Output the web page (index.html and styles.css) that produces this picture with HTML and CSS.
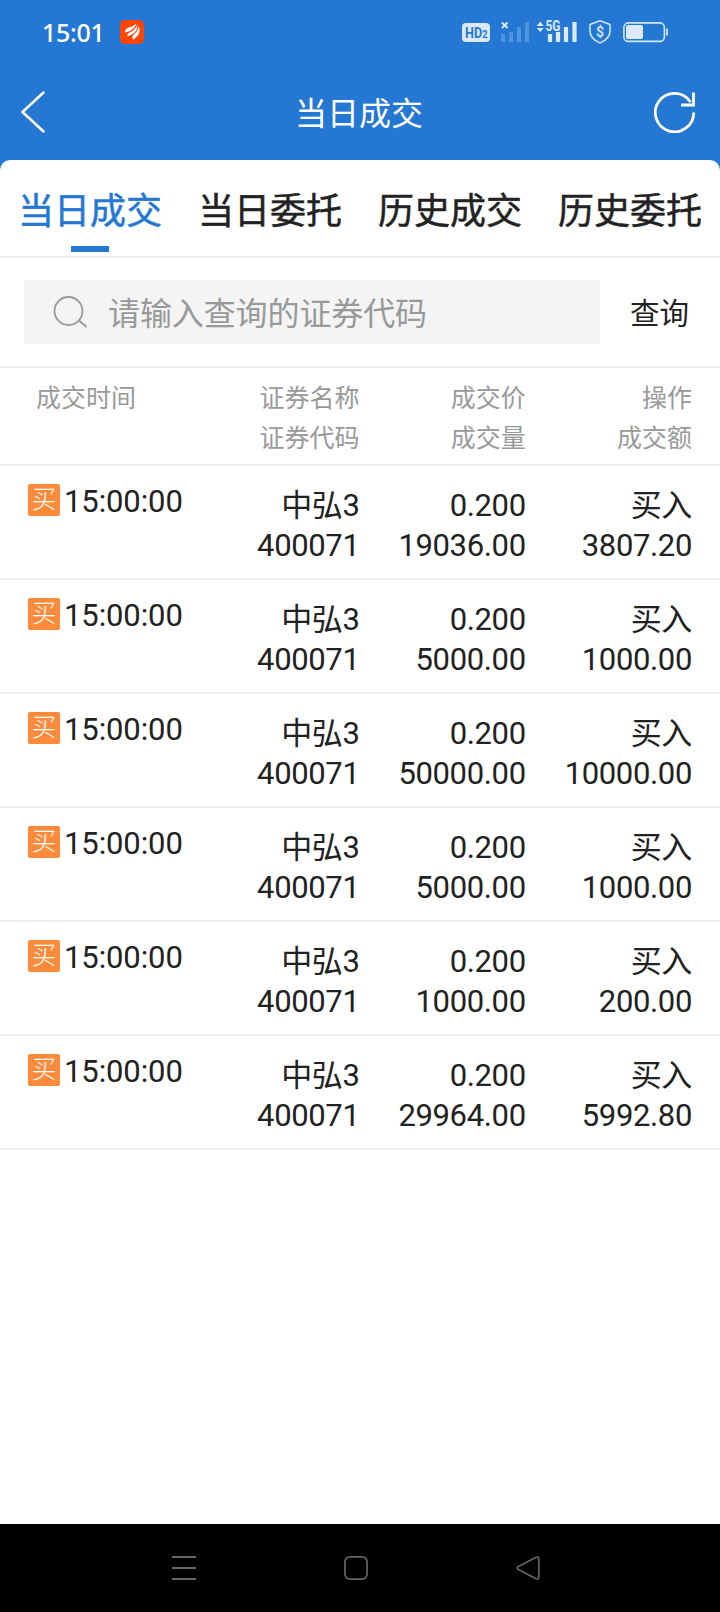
FILE: index.html
```html
<!DOCTYPE html>
<html lang="zh-CN">
<head>
<meta charset="UTF-8">
<meta name="viewport" content="width=device-width, initial-scale=1.0">
<title>当日成交</title>
<link rel="stylesheet" href="styles.css">
</head>
<body>

<div class="screen">
    <header class="header">
        <div class="status-bar">
            <span class="clock">15:01</span>
            <svg class="app-icon" width="24" height="24" viewBox="0 0 24 24">
                <rect width="24" height="24" rx="5" fill="#fe4502"/>
                <g fill="#fff">
                    <path d="M5 12.400C5 9 8 7.500 11 7C13 6 14.500 4.300 16.500 4C14.500 9 10.500 11.500 5 12.400Z"/>
                    <path d="M7.500 16.500C7 13.500 9.500 12.300 11.500 11.500C14.500 9.800 16.500 7 17.500 4.500C18.200 9.500 14 14.500 7.500 16.500Z"/>
                    <path d="M13 19.800C11.700 17 12.700 15.500 14.200 13.800C16.500 11.500 18 8.500 18.300 5.800C21 10.500 19.500 16 13 19.800Z"/>
                </g>
                <path d="M6.500 13.200C11 12 15 8.500 17 4.500M10 17C15 14.500 18 10.500 18.200 5.500" fill="none" stroke="#fe4502" stroke-width="0.800"/>
            </svg>
            <svg class="status-icons" width="208" height="26" viewBox="0 0 208 26">
                <rect x="0" y="4" width="28" height="19" rx="4" fill="#dbe9f9"/>
                <text class="hd" x="3" y="19" textLength="22.500" lengthAdjust="spacingAndGlyphs">HD<tspan class="hd-small">2</tspan></text>
                <path d="M40 3.500L45.500 9M45.500 3.500L40 9" stroke="#dbe9f9" stroke-width="2"/>
                <path d="M41 15v8M49 13v10M57 8v15M65 3v20" stroke="#4e92e0" stroke-width="4"/>
                <path d="M74.700 7L78.200 2.500L81.700 7ZM74.700 9L78.200 13L81.700 9Z" fill="#dbe9f9"/>
                <text class="net" x="83.500" y="12" textLength="15" lengthAdjust="spacingAndGlyphs">5G</text>
                <path d="M88 15v8M96 13v10M104 8v15M112.500 3v20" stroke="#dbe9f9" stroke-width="4.200"/>
                <path d="M138 1.800L148 5.500V12C148 18 144 21.500 138 24C132 21.500 128 18 128 12V5.500Z" fill="none" stroke="#cfe2f7" stroke-width="1.600" stroke-linejoin="round"/>
                <text class="dollar" x="138" y="18">$</text>
                <rect x="161.900" y="3.900" width="40.500" height="18.500" rx="4.500" fill="none" stroke="#cfe8fb" stroke-width="1.600"/>
                <rect x="164" y="6" width="17" height="14" rx="2" fill="#dbe9f9"/>
                <path d="M205 9.500v7" stroke="#cfe2f7" stroke-width="1.800"/>
            </svg>
        </div>
        <div class="title-bar">
            <svg class="back" width="24" height="42" viewBox="0 0 24 42">
                <path d="M22.500 1.500L1.500 21L22.500 40.500" fill="none" stroke="#fff" stroke-width="2.500" stroke-linecap="round" stroke-linejoin="round"/>
            </svg>
            <h1 class="title">当日成交</h1>
            <svg class="refresh" width="42" height="42" viewBox="0 0 42 42">
                <path d="M39.700 21.500A19.200 19.200 0 1 1 36.500 11" fill="none" stroke="#fff" stroke-width="2.800"/>
                <path d="M39.500 1.500V14H27" fill="none" stroke="#fff" stroke-width="2.800"/>
            </svg>
        </div>
    </header>

    <main class="panel">
        <nav class="tabs">
            <a class="tab active">当日成交</a>
            <a class="tab">当日委托</a>
            <a class="tab">历史成交</a>
            <a class="tab">历史委托</a>
        </nav>

        <div class="search">
            <div class="search-box">
                <svg width="36" height="34" viewBox="0 0 36 34">
                    <circle cx="15.500" cy="16" r="14" fill="none" stroke="#999" stroke-width="1.800"/>
                    <path d="M26 25.500L33.500 32" stroke="#999" stroke-width="1.800"/>
                </svg>
                <span class="placeholder">请输入查询的证券代码</span>
            </div>
            <span class="search-button">查询</span>
        </div>

        <div class="row head">
            <div class="cell time">成交时间</div>
            <div class="cell">证券名称<br>证券代码</div>
            <div class="cell">成交价<br>成交量</div>
            <div class="cell">操作<br>成交额</div>
        </div>
        <div class="row">
            <div class="cell time"><span class="badge">买</span>15:00:00</div>
            <div class="cell">中弘3<br>400071</div>
            <div class="cell">0.200<br>19036.00</div>
            <div class="cell">买入<br>3807.20</div>
        </div>
        <div class="row">
            <div class="cell time"><span class="badge">买</span>15:00:00</div>
            <div class="cell">中弘3<br>400071</div>
            <div class="cell">0.200<br>5000.00</div>
            <div class="cell">买入<br>1000.00</div>
        </div>
        <div class="row">
            <div class="cell time"><span class="badge">买</span>15:00:00</div>
            <div class="cell">中弘3<br>400071</div>
            <div class="cell">0.200<br>50000.00</div>
            <div class="cell">买入<br>10000.00</div>
        </div>
        <div class="row">
            <div class="cell time"><span class="badge">买</span>15:00:00</div>
            <div class="cell">中弘3<br>400071</div>
            <div class="cell">0.200<br>5000.00</div>
            <div class="cell">买入<br>1000.00</div>
        </div>
        <div class="row">
            <div class="cell time"><span class="badge">买</span>15:00:00</div>
            <div class="cell">中弘3<br>400071</div>
            <div class="cell">0.200<br>1000.00</div>
            <div class="cell">买入<br>200.00</div>
        </div>
        <div class="row">
            <div class="cell time"><span class="badge">买</span>15:00:00</div>
            <div class="cell">中弘3<br>400071</div>
            <div class="cell">0.200<br>29964.00</div>
            <div class="cell">买入<br>5992.80</div>
        </div>
    </main>

    <!-- system navigation -->
    <footer class="nav-bar">
        <svg width="24" height="24" viewBox="0 0 24 24">
            <path d="M0 1h24M0 12h24M0 23h24" stroke="#666" stroke-width="2"/>
        </svg>
        <svg width="24" height="24" viewBox="0 0 24 24">
            <rect x="0.900" y="0.900" width="22.200" height="22.200" rx="5" fill="none" stroke="#666" stroke-width="1.700"/>
        </svg>
        <svg width="24" height="24" viewBox="0 0 24 24">
            <path d="M2 10.700L20 1.200Q22.800 0.300 22.900 3V21Q22.800 23.700 20 22.800L2 13.300Q0.200 12 2 10.700Z" fill="none" stroke="#666" stroke-width="1.600"/>
        </svg>
    </footer>
</div>

</body>
</html>
```
FILE: styles.css
```css
body {
    margin: 0;
    font-family: Roboto, "Noto Sans CJK SC", sans-serif;
    color: #222;
    background-color: #2577d4;
}

.screen {
    display: flex;
    flex-direction: column;
    width: 720px;
    height: 1612px;
    overflow: hidden;
}

/* header */
.header {
    height: 160px;
    color: #fff;
}

.status-bar {
    display: flex;
    align-items: center;
    height: 64px;
    padding: 0 49px 0 42px;
}

.clock {
    width: 78px;
    font-family: "Noto Sans", sans-serif;
    font-size: 25px;
    font-weight: 500;
    letter-spacing: -0.3px;
    white-space: nowrap;
}

.status-icons {
    margin-left: auto;
    margin-right: 1px;
}

.hd {
    font-family: Roboto, sans-serif;
    font-weight: 700;
    font-size: 15px;
    fill: #2577d4;
}

.hd-small {
    font-size: 11px;
}

.net {
    font-family: Roboto, sans-serif;
    font-size: 14px;
    font-weight: 700;
    fill: #dbe9f9;
}

.dollar {
    font-family: Roboto, sans-serif;
    font-size: 14px;
    font-weight: 700;
    text-anchor: middle;
    fill: #cfe2f7;
}

.title-bar {
    display: flex;
    align-items: center;
    justify-content: space-between;
    height: 96px;
    padding: 0 24px 0 21px;
}

.title {
    margin: 3px 0 0 19px;
    font-size: 32px;
    font-weight: 400;
    line-height: 40px;
}

/* content */
.panel {
    flex: 1;
    border-radius: 10px 10px 0 0;
    background-color: #fff;
}

.tabs {
    display: flex;
    height: 96px;
    border-bottom: 2px solid #ededed;
}

.tab {
    display: flex;
    flex-direction: column;
    align-items: center;
    flex: 1;
    padding-top: 26px;
    font-size: 36px;
    line-height: 52px;
    -webkit-text-stroke: 0.5px;
}

.tab.active {
    color: #2577d4;
}

.tab.active::after {
    content: "";
    width: 38px;
    height: 6px;
    margin-top: 8px;
    background-color: #2577d4;
}

.search {
    display: flex;
    align-items: center;
    height: 108px;
    padding-left: 24px;
    border-bottom: 2px solid #ededed;
}

.search-box {
    display: flex;
    align-items: center;
    box-sizing: border-box;
    width: 576px;
    height: 64px;
    padding-left: 29px;
    background-color: #f4f4f4;
}

.placeholder {
    margin: 3px 0 0 19px;
    font-size: 32px;
    line-height: 40px;
    letter-spacing: -0.1px;
    color: #999;
}

.search-button {
    margin: 4px 0 0 30px;
    font-size: 29.5px;
    line-height: 40px;
}

.row {
    display: grid;
    grid-template-columns: repeat(4, 1fr);
    box-sizing: border-box;
    height: 114px;
    padding: 20px 28px 0 27px;
    border-bottom: 2px solid #ededed;
    font-size: 31px;
    line-height: 40px;
}

.cell {
    text-align: right;
    letter-spacing: -0.35px;
    white-space: nowrap;
}

.cell.time {
    display: flex;
    align-items: center;
    height: 32px;
    padding-left: 1px;
    letter-spacing: -0.1px;
}

.row.head {
    height: 98px;
    padding-top: 11px;
    font-size: 25px;
    color: #999;
}

.head .cell {
    letter-spacing: 0;
}

.head .cell.time {
    height: 40px;
    padding-left: 9px;
}

.badge {
    width: 32px;
    height: 32px;
    margin: -4px 4px 0 0;
    border-radius: 2px;
    background-color: #ff8b3a;
    color: #fff;
    font-size: 25px;
    font-weight: 300;
    line-height: 32px;
    text-align: center;
}

.nav-bar {
    display: flex;
    justify-content: space-between;
    box-sizing: border-box;
    height: 88px;
    padding: 32px 180px 0 172px;
    background-color: #000;
}
```
